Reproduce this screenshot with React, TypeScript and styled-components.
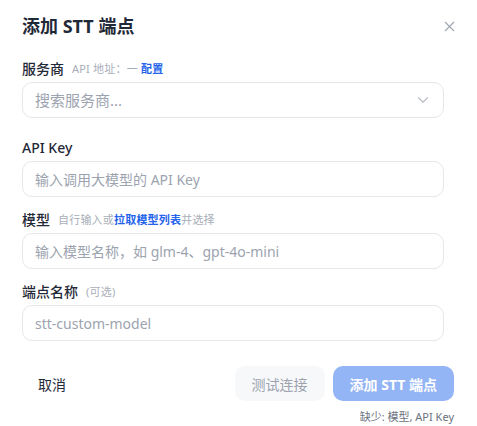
import React from "react";
import styled, { createGlobalStyle } from "styled-components";
import { X, ChevronDown } from "lucide-react";

const GlobalStyle = createGlobalStyle`
  html, body { margin: 0; padding: 0; background: #ffffff; }
  body {
    font-family: "Noto Sans", "Noto Sans CJK SC", sans-serif;
    color: #1f2937;
    -webkit-font-smoothing: antialiased;
  }
  * { box-sizing: border-box; }
`;

const Dialog = styled.div`
  width: 477px;
  height: 426px;
  background: #ffffff;
  padding: 14px 23px 0 22px;
  display: flex;
  flex-direction: column;
`;

const Header = styled.div`
  display: flex;
  align-items: center;
  justify-content: space-between;
  height: 24px;
`;

const Title = styled.h2`
  margin: 0;
  font-size: 18px;
  line-height: 24px;
  font-weight: 700;
  color: #1f2937;
`;

const CloseButton = styled.button`
  border: none;
  background: transparent;
  padding: 0;
  width: 18px;
  height: 18px;
  display: flex;
  align-items: center;
  justify-content: center;
  color: #9ca3af;
  margin-right: -4px;
  cursor: pointer;
`;

const Form = styled.div`
  margin-top: 21px;
  padding-right: 10px;
  display: flex;
  flex-direction: column;
`;

const Field = styled.div<{ $space: number }>`
  display: flex;
  flex-direction: column;
  margin-bottom: ${(p) => p.$space}px;
`;

const LabelRow = styled.div`
  display: flex;
  align-items: center;
  gap: 8px;
  height: 20px;
  margin-bottom: 3px;
`;

const Label = styled.label`
  font-size: 14px;
  line-height: 20px;
  font-weight: 500;
  color: #1f2937;
`;

const Hint = styled.span`
  font-size: 11px;
  line-height: 16px;
  color: #a8aeb8;
  letter-spacing: 0.2px;
`;

const HintLink = styled.a`
  color: #2563eb;
  font-weight: 600;
  text-decoration: none;
`;

const InputWrap = styled.div`
  position: relative;
  display: flex;
  align-items: center;
`;

const Input = styled.input<{ $size?: number }>`
  width: 100%;
  height: 36px;
  border: 1px solid #e5e7eb;
  border-radius: 10px;
  padding: 0 12px;
  font-family: inherit;
  font-size: ${(p) => p.$size ?? 14}px;
  color: #1f2937;
  background: #ffffff;
  outline: none;
  &::placeholder { color: #9ca3af; }
`;

const Chevron = styled.span`
  position: absolute;
  right: 12px;
  top: 50%;
  transform: translateY(-50%);
  display: flex;
  color: #b8bdc4;
  pointer-events: none;
`;

const Footer = styled.div`
  margin-top: 25px;
  display: flex;
  justify-content: space-between;
  align-items: flex-start;
`;

const GhostButton = styled.button`
  height: 36px;
  border: none;
  background: transparent;
  padding: 0 16px;
  font-family: inherit;
  font-size: 14px;
  color: #1f2937;
  cursor: pointer;
`;

const RightGroup = styled.div`
  display: flex;
  flex-direction: column;
  align-items: flex-end;
`;

const ButtonRow = styled.div`
  display: flex;
  gap: 8px;
`;

const Button = styled.button<{ $primary?: boolean }>`
  height: 35px;
  border: none;
  border-radius: 10px;
  padding: 0 17px;
  font-family: inherit;
  font-size: 14px;
  font-weight: ${(p) => (p.$primary ? 700 : 400)};
  background: ${(p) => (p.$primary ? "#93b4f5" : "#f7f8fa")};
  color: ${(p) => (p.$primary ? "#ffffff" : "#9ca3af")};
  cursor: not-allowed;
`;

const Note = styled.div`
  margin-top: 9px;
  font-size: 11px;
  line-height: 14px;
  color: #6b7280;
`;

export default function App() {
  return (
    <>
      <GlobalStyle />
      <Dialog>
        <Header>
          <Title>添加 STT 端点</Title>
          <CloseButton aria-label="关闭">
            <X size={17} strokeWidth={1.5} />
          </CloseButton>
        </Header>
        <Form>
          <Field $space={20}>
            <LabelRow>
              <Label>服务商</Label>
              <Hint>
                API 地址：一 <HintLink>配置</HintLink>
              </Hint>
            </LabelRow>
            <InputWrap>
              <Input $size={15} placeholder="搜索服务商..." />
              <Chevron>
                <ChevronDown size={18} strokeWidth={1.5} />
              </Chevron>
            </InputWrap>
          </Field>
          <Field $space={13}>
            <LabelRow>
              <Label>API Key</Label>
            </LabelRow>
            <Input placeholder="输入调用大模型的 API Key" />
          </Field>
          <Field $space={13}>
            <LabelRow>
              <Label>模型</Label>
              <Hint>
                自行输入或<HintLink>拉取模型列表</HintLink>并选择
              </Hint>
            </LabelRow>
            <Input placeholder="输入模型名称，如 glm-4、gpt-4o-mini" />
          </Field>
          <Field $space={0}>
            <LabelRow>
              <Label>端点名称</Label>
              <Hint>(可选)</Hint>
            </LabelRow>
            <Input placeholder="stt-custom-model" />
          </Field>
        </Form>
        <Footer>
          <GhostButton>取消</GhostButton>
          <RightGroup>
            <ButtonRow>
              <Button>测试连接</Button>
              <Button $primary>添加 STT 端点</Button>
            </ButtonRow>
            <Note>缺少: 模型, API Key</Note>
          </RightGroup>
        </Footer>
      </Dialog>
    </>
  );
}
